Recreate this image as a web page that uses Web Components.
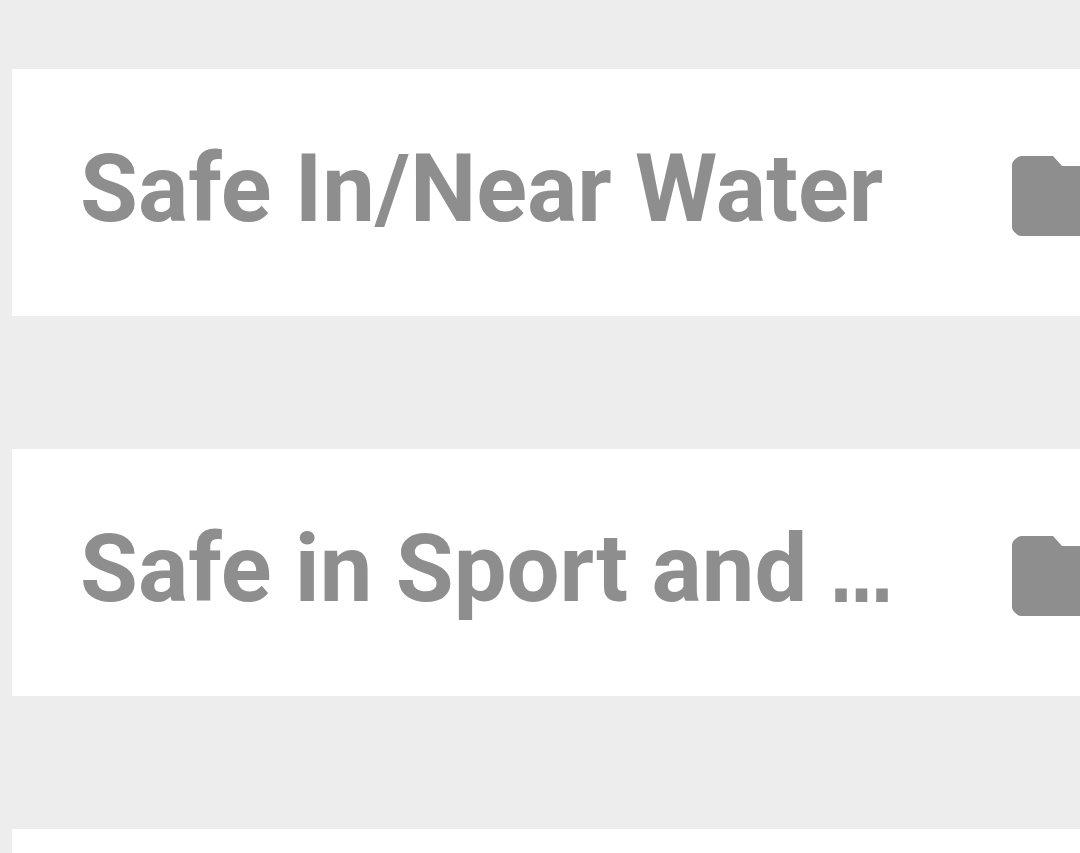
<!DOCTYPE html>
<html lang="en">
<head>
<meta charset="utf-8">
<title>Folders</title>
<style>
  html { background: #ededed; }
  body { margin: 0; font-family: Roboto, sans-serif; }
</style>
</head>
<body>
<folder-list>
  <folder-card>Safe In/Near Water</folder-card>
  <folder-card>Safe in Sport and <span>...</span></folder-card>
  <folder-card></folder-card>
</folder-list>
<script>
class FolderIcon extends HTMLElement {
  constructor() {
    super();
    this.attachShadow({ mode: 'open' }).innerHTML = `
      <style>
        :host { display: block; flex: none; width: 120px; height: 120px; }
        svg { display: block; width: 100%; height: 100%; fill: #8e8e8e; }
      </style>
      <svg viewBox="0 0 24 24" aria-hidden="true">
        <path d="M10.2 4H3.8Q3.3 4 2.8 4.5Q2 5.1 2 5.8V18.2Q2 18.9 2.8 19.5Q3.3 20 3.8 20H20.2C21.2 20 22 19.2 22 18.2V7.8C22 6.8 21.2 6 20.2 6H12L10.2 4z"/>
      </svg>`;
  }
}
class FolderCard extends HTMLElement {
  constructor() {
    super();
    this.attachShadow({ mode: 'open' }).innerHTML = `
      <style>
        :host {
          display: flex; align-items: flex-start; box-sizing: border-box;
          min-height: 247px; padding: 67px 0 0 68px; background: #fff; color: #8e8e8e;
        }
        h2 {
          flex: 1 0 auto; min-width: 922px; margin: 0;
          font-size: 94px; line-height: 106px; font-weight: 700; white-space: nowrap;
        }
        /* square, tightly set dots for shortened titles */
        ::slotted(span) {
          font-family: "DejaVu Sans Condensed", "DejaVu Sans", sans-serif;
          font-size: 60px; line-height: 1;
          -webkit-text-stroke: 2px currentColor;
        }
      </style>
      <h2><slot></slot></h2>
      <folder-icon></folder-icon>`;
  }
}
class FolderList extends HTMLElement {
  constructor() {
    super();
    this.attachShadow({ mode: 'open' }).innerHTML = `
      <style>
        :host {
          display: grid; align-content: start; gap: 133px; box-sizing: border-box;
          height: 100vh; padding: 69px 0 0 12px; overflow: hidden;
        }
      </style>
      <slot></slot>`;
  }
}
customElements.define('folder-icon', FolderIcon);
customElements.define('folder-card', FolderCard);
customElements.define('folder-list', FolderList);
</script>
</body>
</html>
